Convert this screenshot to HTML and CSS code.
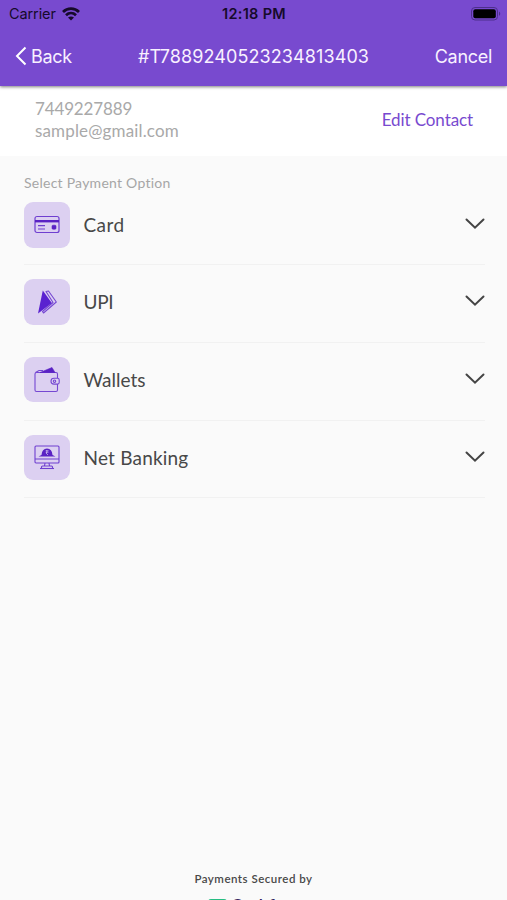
FILE: index.html
```html
<!DOCTYPE html>
<html lang="en">
<head>
    <meta charset="UTF-8">
    <meta name="viewport" content="width=device-width, initial-scale=1.0">
    <title>Payment</title>
    <link rel="stylesheet" href="styles.css">
</head>
<body>

    <header class="header">
        <div class="status-bar">
            <div class="carrier">
                <span class="carrier-name">Carrier</span>
                <svg width="18" height="14" viewBox="0 0 18 14" fill="none" stroke="#160a2b" stroke-width="2.7">
                    <path d="M1 5C5.500 .5 12.500 .5 17 5M4 8.300C6.900 5.500 11.100 5.500 14 8.300"/>
                    <path d="M9 13.500L6 10.600Q9 8.200 12 10.600Z" fill="#160a2b" stroke="none"/>
                </svg>
            </div>
            <span class="time">12:18 PM</span>
            <svg class="battery" width="31" height="14" viewBox="0 0 31 14">
                <rect x=".5" y=".5" width="26" height="12.500" rx="3.500" fill="none" stroke="#4d2f8c"/>
                <rect x="2.300" y="2.300" width="22.500" height="9" rx="2" fill="#000"/>
                <path d="M28 4.500Q30.500 6.700 28 9Z" fill="#4d2f8c"/>
            </svg>
        </div>
        <nav class="nav-bar">
            <a class="back">
                <svg width="12" height="20" viewBox="0 0 12 20" fill="none" stroke="#fff" stroke-width="2">
                    <path d="M10.500 1.500L2 10L10.500 18.500"/>
                </svg>
                <span class="back-text">Back</span>
            </a>
            <span class="order-id">#T7889240523234813403</span>
            <a class="cancel">Cancel</a>
        </nav>
    </header>

    <section class="contact">
        <div class="contact-info">
            <div class="phone">7449227889</div>
            <div class="email">sample@gmail.com</div>
        </div>
        <a class="edit">Edit Contact</a>
    </section>

    <main class="options">
        <div class="options-title">Select Payment Option</div>

        <div class="option">
            <div class="icon">
                <svg width="26" height="26" viewBox="0 0 26 26" fill="none" stroke="#6f3fd0" stroke-width="1.200">
                    <rect x="1" y="4.500" width="24" height="16" rx="2"/>
                    <path d="M1 9.200H25" stroke="#5a22c4" stroke-width="2.400"/>
                    <path d="M4 13.700H11M4 17H11"/>
                    <rect x="18" y="13.200" width="4" height="4" rx="1" fill="#5a22c4" stroke="#5a22c4" stroke-width=".6"/>
                </svg>
            </div>
            <span class="option-name card">Card</span>
            <svg class="chevron" width="20" height="12" viewBox="0 0 20 12"><path d="M1.500 1.500L10 9.700L18.500 1.500"/></svg>
        </div>

        <div class="option">
            <div class="icon">
                <svg width="26" height="26" viewBox="0 0 26 26">
                    <path d="M12 2.500L14.500 2L22.300 13L9.500 24L8.500 22.500L19 13.500Z" fill="none" stroke="#7547d2" stroke-width="1.100" stroke-linejoin="round"/>
                    <path d="M8.800 1.500L17.800 14L4 24.500Z" fill="#5a22d0"/>
                </svg>
            </div>
            <span class="option-name upi">UPI</span>
            <svg class="chevron" width="20" height="12" viewBox="0 0 20 12"><path d="M1.500 1.500L10 9.700L18.500 1.500"/></svg>
        </div>

        <div class="option">
            <div class="icon">
                <svg width="26" height="26" viewBox="0 0 26 26" fill="none" stroke="#7547d2" stroke-width="1.100">
                    <path d="M23.500 11V7Q23.500 5.500 22 5.500H2.500Q1 5.500 1 7V23Q1 24.500 2.500 24.500H22Q23.500 24.500 23.500 23V17"/>
                    <path d="M1.500 5.500L5 3.500H9"/>
                    <path d="M6 5.500L18 .5L21 5.500Z" fill="#5a22c4" stroke="#5a22c4" stroke-width=".6"/>
                    <path d="M23.500 11.300H20Q17 11.300 17 14.200T20 17.100H23.500Q25.200 17.100 25.200 15.500V13Q25.200 11.300 23.500 11.300Z"/>
                    <circle cx="20.500" cy="14.200" r="1.200"/>
                </svg>
            </div>
            <span class="option-name wallets">Wallets</span>
            <svg class="chevron" width="20" height="12" viewBox="0 0 20 12"><path d="M1.500 1.500L10 9.700L18.500 1.500"/></svg>
        </div>

        <div class="option">
            <div class="icon">
                <svg width="26" height="26" viewBox="0 0 26 26" fill="none" stroke="#6f3fd0" stroke-width="1.100">
                    <rect x="1" y="2" width="24" height="17" rx="1"/>
                    <path d="M1 15H25M11 19L10.500 22M15 19L15.500 22"/>
                    <path d="M7.500 24.500V23Q7.500 22 8.500 22H17.500Q18.500 22 18.500 23V24.500Z"/>
                    <path d="M7.500 11Q8 4.500 13 4.500T18.500 11L21.500 12.400H4.500Z" fill="#5a22c4" stroke="none"/>
                    <path d="M11.700 6.700H14.500M11.700 8.200H14.500M12 6.700Q14.500 7.500 12 9L14 11" stroke="#d9ccef" stroke-width=".7"/>
                    <path d="M6 24.500H20"/>
                </svg>
            </div>
            <span class="option-name banking">Net Banking</span>
            <svg class="chevron" width="20" height="12" viewBox="0 0 20 12"><path d="M1.500 1.500L10 9.700L18.500 1.500"/></svg>
        </div>
    </main>

    <footer class="footer">
        <div class="secured">Payments Secured by</div>
        <div class="brand">
            <span class="brand-mark"></span>
            <span class="brand-name">Cashfree</span>
        </div>
    </footer>

</body>
</html>
```
FILE: styles.css
```css
* {
    box-sizing: border-box;
}

body {
    margin: 0;
    height: 900px;
    overflow: hidden;
    display: flex;
    flex-direction: column;
    background-color: #fafafa;
    font-family: Lato, sans-serif;
    color: #484848;
}

span, a, div {
    white-space: nowrap;
}

svg {
    display: block;
    flex: none;
}

.header {
    height: 86px;
    flex: none;
    background-color: #784acf;
    box-shadow: 0 1px 3px rgba(0, 0, 0, 0.5);
    font-family: Inter, sans-serif;
    z-index: 1;
}

.status-bar {
    display: grid;
    grid-template-columns: 1fr auto 1fr;
    align-items: center;
    height: 27px;
    padding: 0 7px 0 9px;
    color: #160a2b;
}

.carrier {
    display: flex;
    align-items: center;
    gap: 6px;
    font-size: 14.5px;
    letter-spacing: -0.1px;
}

.time {
    margin-right: 1px;
    font-size: 14.5px;
    font-weight: 600;
    letter-spacing: 0.3px;
}

.battery {
    justify-self: end;
    margin-right: -2px;
}

.nav-bar {
    display: grid;
    grid-template-columns: 1fr auto 1fr;
    align-items: center;
    height: 58px;
    padding: 0 15px;
    color: #f8f1ff;
    font-size: 18px;
}

.back {
    display: flex;
    align-items: center;
    gap: 4px;
    letter-spacing: -0.3px;
}

.order-id {
    letter-spacing: 0.1px;
}

.cancel {
    justify-self: end;
    letter-spacing: -0.3px;
}

/* Contact details */
.contact {
    display: flex;
    justify-content: space-between;
    align-items: center;
    height: 69.5px;
    flex: none;
    padding: 0 34px 1px 35px;
    background-color: #fff;
}

.contact-info {
    color: #a9a9a9;
    font-size: 17px;
    line-height: 22px;
}

.phone {
    letter-spacing: -0.15px;
}

.email {
    letter-spacing: 0.15px;
}

.edit {
    padding-bottom: 1px;
    color: #784acf;
    font-size: 17px;
    letter-spacing: -0.1px;
}

/* Payment options */
.options {
    padding: 16.5px 22px 0 24px;
}

.options-title {
    height: 21px;
    line-height: 21px;
    margin-bottom: 9px;
    color: #a6a6a6;
    font-size: 14px;
    letter-spacing: 0.25px;
}

.option {
    display: flex;
    align-items: flex-start;
    height: 77.8px;
    border-bottom: 1px solid #f1f1f1;
}

.option:nth-child(2) {
    height: 63px;
}

.option + .option {
    padding-top: 14px;
}

.icon {
    display: flex;
    align-items: center;
    justify-content: center;
    width: 45.5px;
    height: 45.5px;
    border-radius: 9px;
    background-color: #dcd0f1;
}

.option-name {
    flex: 1;
    margin-left: 14px;
    line-height: 45px;
    font-size: 19px;
}

.card {
    letter-spacing: 0.4px;
}

.upi {
    letter-spacing: -0.3px;
}

.banking {
    letter-spacing: 0.2px;
}

.chevron {
    margin-top: 16px;
    fill: none;
    stroke: #444;
    stroke-width: 2;
    stroke-linecap: round;
}

.footer {
    margin-top: auto;
    height: 29px;
    text-align: center;
    font-weight: 600;
}

.secured {
    height: 26px;
    line-height: 16px;
    font-size: 11.5px;
    letter-spacing: 0.5px;
}

/* The brand row runs past the bottom of the screen */
.brand {
    display: flex;
    justify-content: center;
    gap: 4px;
    height: 20px;
    color: #35265f;
}

.brand-mark {
    width: 19px;
    height: 14px;
    margin-top: 2px;
    border-radius: 3px;
    background-color: #27bd83;
}

.brand-name {
    line-height: 18px;
    font-size: 17.5px;
}
```
